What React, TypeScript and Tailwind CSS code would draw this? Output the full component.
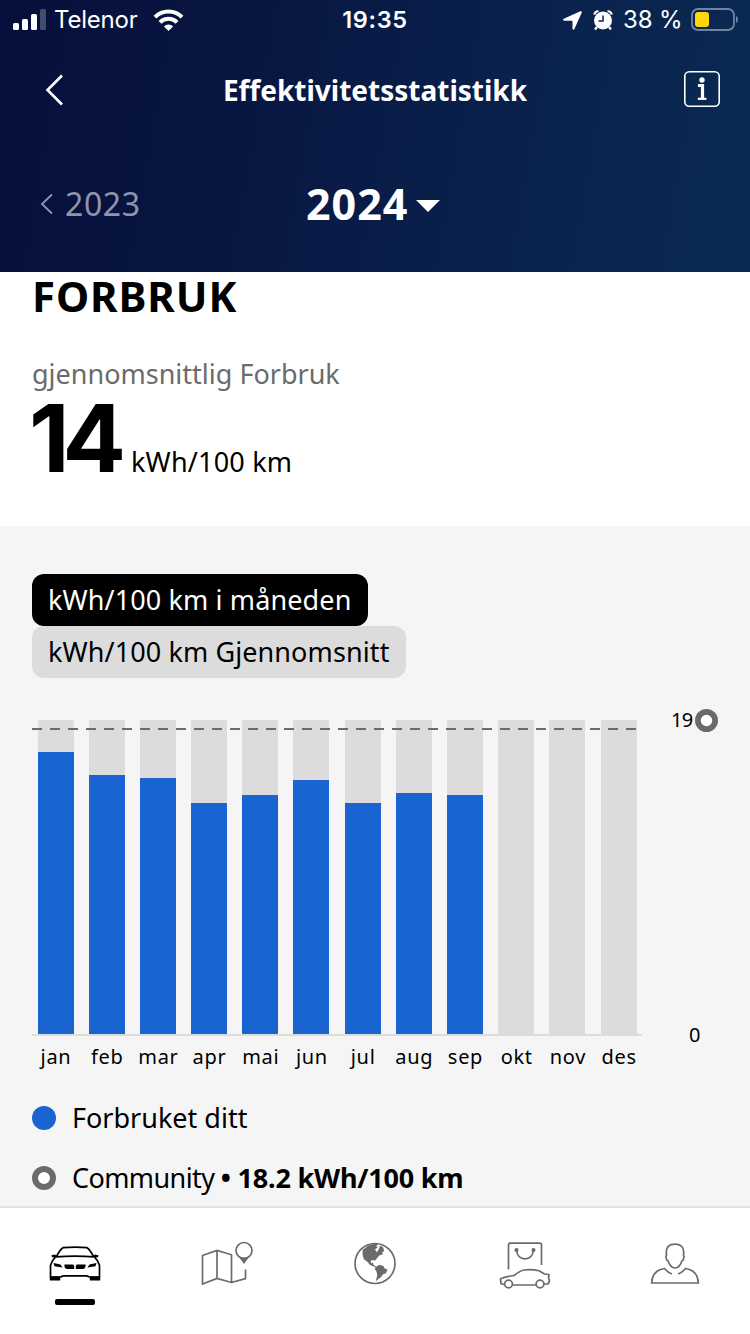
import type { ReactNode } from 'react';

const MONTHS = [
  { label: 'jan', height: 282 },
  { label: 'feb', height: 259 },
  { label: 'mar', height: 256 },
  { label: 'apr', height: 231 },
  { label: 'mai', height: 239 },
  { label: 'jun', height: 254 },
  { label: 'jul', height: 231 },
  { label: 'aug', height: 241 },
  { label: 'sep', height: 239 },
  { label: 'okt', height: 0 },
  { label: 'nov', height: 0 },
  { label: 'des', height: 0 },
];

function StatusBar() {
  return (
    <div className="grid h-10 grid-cols-3 items-center font-['Inter','Liberation_Sans',sans-serif] text-[24px] leading-10">
      <div className="flex items-center pl-[13px]">
        <svg width="34" height="22" viewBox="0 0 34 22" fill="#fff">
          <rect x="0" y="14" width="6" height="7" rx="1.5" />
          <rect x="9" y="10" width="6" height="11" rx="1.5" />
          <rect x="18" y="5" width="6" height="16" rx="1.5" />
          <rect x="27" y="0" width="6" height="21" rx="1.5" opacity=".25" />
        </svg>
        <span className="ml-[7px] w-[84px] whitespace-nowrap tracking-[-0.2px]">Telenor</span>
        <svg className="ml-[15px]" width="31" height="22" viewBox="0 0 31 22" fill="none" stroke="#fff" strokeWidth="4">
          <path d="M2 8.2a19 19 0 0 1 27 0" />
          <path d="M7 13.3a12 12 0 0 1 17 0" />
          <path d="M15.5 22l-4.6-4.6a6.5 6.5 0 0 1 9.2 0z" fill="#fff" stroke="none" />
        </svg>
      </div>
      <div className="text-center text-[23.5px] font-semibold tracking-[0.7px]">19:35</div>
      <div className="flex items-center justify-end pr-3">
        <svg width="19" height="19" viewBox="0 0 18 18" fill="#fff">
          <path d="M16.4.2Q18.2-.2 17.8 1.5L10.8 17q-1 1.8-1.800-.2V9.200H1.200Q-.9 8.600.7 7.400z" />
        </svg>
        <svg className="ml-[11px]" width="20" height="20" viewBox="0 0 20 20">
          <circle cx="10" cy="10.5" r="9" fill="#fff" />
          <path d="M1.400 4.600A3.500 3.500 0 0 1 5.500 1.300M18.600 4.600A3.500 3.500 0 0 0 14.500 1.300" fill="none" stroke="#fff" strokeWidth="2.2" />
          <path d="M4 17L2 19.500M16 17l2 2.500" stroke="#fff" strokeWidth="2.4" />
          <path d="M10 5.500v5.500H5.500" fill="none" stroke="#08204a" strokeWidth="1.5" />
        </svg>
        <span className="ml-[10px] w-[58px] whitespace-nowrap tracking-[-0.1px]">38 %</span>
        <svg className="ml-[9px]" width="48" height="24" viewBox="0 0 48 24">
          <rect x="2" y="1" width="42" height="21" rx="6" fill="none" stroke="#7683a0" strokeWidth="1.8" />
          <rect x="5" y="4" width="14" height="15" rx="3" fill="#ffd60a" />
          <path d="M46 8q2 .8 2 3.500t-2 3.500z" fill="#7683a0" />
        </svg>
      </div>
    </div>
  );
}

function Header() {
  return (
    <header className="h-[272px] bg-[linear-gradient(100deg,#060f3b_0%,#081742_35%,#09224d_70%,#0a2a52_100%)] text-white">
      <StatusBar />
      <div className="grid h-[100px] grid-cols-[120px_1fr_120px] items-center">
        <svg className="ml-[45px]" width="18" height="32" viewBox="0 0 18 32" fill="none" stroke="#fff" strokeWidth="2.6">
          <path d="M17 1.500L2.500 16 17 30.500" />
        </svg>
        <h1 className="whitespace-nowrap text-center text-[28px] font-bold leading-[38px]">
          Effektivitetsstatistikk
        </h1>
        <svg className="ml-[54px] -mt-[2px]" width="36" height="36" viewBox="0 0 36 36" fill="none" stroke="#fff">
          <rect x=".8" y=".8" width="34.4" height="34.4" rx="4.5" strokeWidth="1.6" />
          <circle cx="18" cy="9" r="2.7" fill="#fff" stroke="none" />
          <path d="M14 14.500h4.500v13" strokeWidth="3.2" />
          <path d="M13.800 27.800h8.600" strokeWidth="2.2" />
        </svg>
      </div>
      <div className="grid h-[128px] grid-cols-[250px_1fr_250px] items-center">
        <div className="flex items-center pl-10 text-[#8f95ac]">
          <svg width="13" height="22" viewBox="0 0 13 22" fill="none" stroke="currentColor" strokeWidth="1.8">
            <path d="M12 1.500L2 11l10 9.500" />
          </svg>
          <span className="ml-3 text-[32px] leading-10 tracking-[0.6px]">2023</span>
        </div>
        <div className="flex items-center pl-[56px]">
          <span className="text-[43px] font-bold leading-[54px] tracking-[1px]">2024</span>
          <svg className="ml-2 mt-1" width="24" height="13" viewBox="0 0 24 13" fill="#fff">
            <path d="M0 0h24L12 12z" />
          </svg>
        </div>
      </div>
    </header>
  );
}

function Summary() {
  return (
    <section className="h-[254px] bg-white pl-8">
      <h2 className="text-[42px] font-bold leading-[48px] tracking-[0.9px]">FORBRUK</h2>
      <p className="mt-[34px] text-[27px] leading-10 text-[#6b6b6b]">gjennomsnittlig Forbruk</p>
      <div className="flex h-[90px] items-baseline">
        <span className="-ml-[3px] w-[102px] font-['Inter','Liberation_Sans',sans-serif] text-[94px] font-bold leading-[88px] tracking-[-7px]">14</span>
        <span className="whitespace-nowrap text-[27px] leading-9 tracking-[0.2px]">kWh/100 km</span>
      </div>
    </section>
  );
}

function Ring({ size }: { size: number }) {
  return (
    <svg width={size} height={size} viewBox="0 0 24 24">
      <circle cx="12" cy="12" r="9" fill="#fff" stroke="#6b6b6b" strokeWidth="6" />
    </svg>
  );
}

function Chart() {
  return (
    <div className="mt-[42px] flex">
      <div className="w-[610px]">
        <div className="relative flex h-[316px] items-start gap-[15.2px] border-b-2 border-[#dcdcdc] pl-[5.5px]">
          {MONTHS.map((month) => (
            <div key={month.label} className="flex h-[314px] w-9 shrink-0 items-end overflow-hidden rounded-t-[2px] bg-[#dcdcdc]">
              <div className="w-full bg-[#1964d1]" style={{ height: month.height }} />
            </div>
          ))}
          {/* community average */}
          <div className="absolute left-0 top-[7.5px] h-[2px] w-[604px] bg-[repeating-linear-gradient(90deg,#6b6b6b_0_10px,transparent_10px_18px)]" />
        </div>
        <div className="-ml-[1px] mt-[7px] flex gap-[1.2px] text-[20px] leading-7 tracking-[0.7px]">
          {MONTHS.map((month) => (
            <span key={month.label} className="w-[50px] shrink-0 text-center">{month.label}</span>
          ))}
        </div>
      </div>
      <div className="-mt-[14px] flex h-[343px] flex-1 flex-col justify-between text-[20px] leading-7">
        <div className="flex items-center gap-[2px] pl-[29px]">
          <span className="w-[22px] tracking-[-0.8px]">19</span>
          <Ring size={23} />
        </div>
        <span className="pl-[47px]">0</span>
      </div>
    </div>
  );
}

function Consumption() {
  return (
    <section className="h-[680px] bg-[#f5f5f5] pl-8 pt-12">
      <div className="flex flex-col items-start text-[27px] leading-[52px]">
        <button className="h-[52px] w-[336px] whitespace-nowrap rounded-xl bg-black pl-4 text-left tracking-[0.12px] text-white">
          kWh/100 km i måneden
        </button>
        <button className="h-[52px] w-[374px] whitespace-nowrap rounded-xl bg-[#dcdcdc] pl-4 text-left tracking-[0.1px]">
          kWh/100 km Gjennomsnitt
        </button>
      </div>
      <Chart />
      <div className="mt-[17px] flex flex-col text-[27px] leading-[60px]">
        <div className="flex h-[60px] items-center gap-4">
          <div className="size-6 rounded-full bg-[#1964d1]" />
          <span>Forbruket ditt</span>
        </div>
        <div className="flex h-[60px] items-center gap-4">
          <Ring size={24} />
          <span className="whitespace-nowrap tracking-[-0.6px]">
            Community <b className="tracking-[-0.2px]">• 18.2 kWh/100 km</b>
          </span>
        </div>
      </div>
    </section>
  );
}

function Tab({ active, children }: { active?: boolean; children: ReactNode }) {
  return (
    <button className="flex w-[150px] flex-col items-center pt-[27px]">
      <svg width="60" height="60" viewBox="0 0 60 60" fill="none" stroke={active ? '#000' : '#6b6b6b'} strokeWidth="1.7" strokeLinejoin="round">
        {children}
      </svg>
      {active && <span className="mt-1 h-[6px] w-10 rounded-[2px] bg-black" />}
    </button>
  );
}

function TabBar() {
  return (
    <nav className="flex h-[128px] items-start border-t-2 border-[#e2e2e2] bg-white">
      <Tab active>
        <path d="M11.500 21.500q3.500-7 6.500-8.800 12-1.200 24 0 3 1.800 6.500 8.800" />
        <path d="M10.500 21.800q19.500-1.500 39 0 3.500 3.500 5 8.500V42H44.500q-2-1.200-4-1.200h-21q-2 0-4 1.200H5.500V30.300Q7 25.300 10.500 21.800z" />
        <path d="M6.500 20.200l3.500-.8 1.500 1.300-1 1.500H7zM53.500 20.200l-3.500-.8-1.500 1.300 1 1.500H53z" fill="#000" stroke="none" />
        <path d="M4.800 41.500h10.400v4H4.800zM44.800 41.500h10.400v4H44.800zM8.500 28l7 1.500 2 3-8-1.200zM51.500 28l-7 1.500-2 3 8-1.200zM19.500 29.500h8.700l1 1v3.500h-7.500q-2.800-.5-2.200-4.500zM40.500 29.500h-8.700l-1 1v3.500h7.500q2.800-.5 2.200-4.500z" fill="#000" stroke="none" />
      </Tab>
      <Tab>
        <path d="M7.500 20.500L22 15.500l14.500 4.300V47.500L22 43.500 7.500 49zM22 15.500v28M36.500 47.500l14-4V34.500" strokeLinejoin="miter" />
        <circle cx="49" cy="15.500" r="8" />
        <path d="M44.300 22.500h9.400L49 29z" fill="#6b6b6b" stroke="none" />
      </Tab>
      <Tab>
        <circle cx="30" cy="28.500" r="20" />
        <path d="M17.500 15l6-4.500 6-2 4 .8-2.500 1.700 1.800 1-2.800 2.500 2 2.800 2-3.500 1-3 3 1.200 1.200 4-2.200 1.500 1 1.800-3.800 1.300-3.200 3.800-.8 1-3.200-.3-1.500 1.500 1 1.800 1.500-.8.2 2 2.500 2 1.700 1-1 .2-4-1.800-2.700-1.200-1.800-2.600-4.200-3.300-1-4z" fill="#6b6b6b" stroke="none" />
        <path d="M31.500 31.500l3-1.800 4 1.200 1 2.300 3 1.300-1.500 3.700-3 1-2 3-2.500 1.500-1.800 2-.8-.2 1.300-5-.6-3.800-2-3z" fill="#6b6b6b" stroke="none" />
      </Tab>
      <Tab>
        <path d="M13.500 34.500V10q0-1.800 1.800-1.800h29.400Q46.500 8.200 46.500 10v20" />
        <path d="M21.500 15q1 8.800 8.500 8.800T38.500 15" />
        <circle cx="21.500" cy="15" r="1.200" fill="#6b6b6b" />
        <circle cx="38.500" cy="15" r="1.200" fill="#6b6b6b" />
        <path d="M9 49.500l-3-.8-.5-5q4-2 13.500-3.200 6-4.700 10-5.500 8-1 15 .8l5.500 3.200 4.500.5-.5 3 1 3.500-1.500 3H49M17.500 50H41" />
        <circle cx="13.500" cy="49" r="3.900" />
        <circle cx="45" cy="49" r="3.900" />
      </Tab>
      <Tab>
        <path d="M30 9.200c-5.500 0-8.700 2.500-8.700 7.800l.2 3.500-.6.800.8 3.800 1.300.7C24.500 30.500 26.500 33 30 33s5.500-2.500 7-7.200l1.300-.7.8-3.800-.6-.8.2-3.500c0-5.300-3.200-7.800-8.700-7.800z" />
        <path d="M27 39q-3.500-.8-7.500-5.500-12.500 2-12.800 14.500h46.600Q53 35.500 40.500 33.500 36.500 38.200 33 39" strokeLinejoin="miter" />
      </Tab>
    </nav>
  );
}

export default function App() {
  return (
    <div className="h-[1334px] w-[750px] overflow-hidden bg-white font-['Noto_Sans','Open_Sans',sans-serif] text-black">
      <Header />
      <Summary />
      <Consumption />
      <TabBar />
    </div>
  );
}
